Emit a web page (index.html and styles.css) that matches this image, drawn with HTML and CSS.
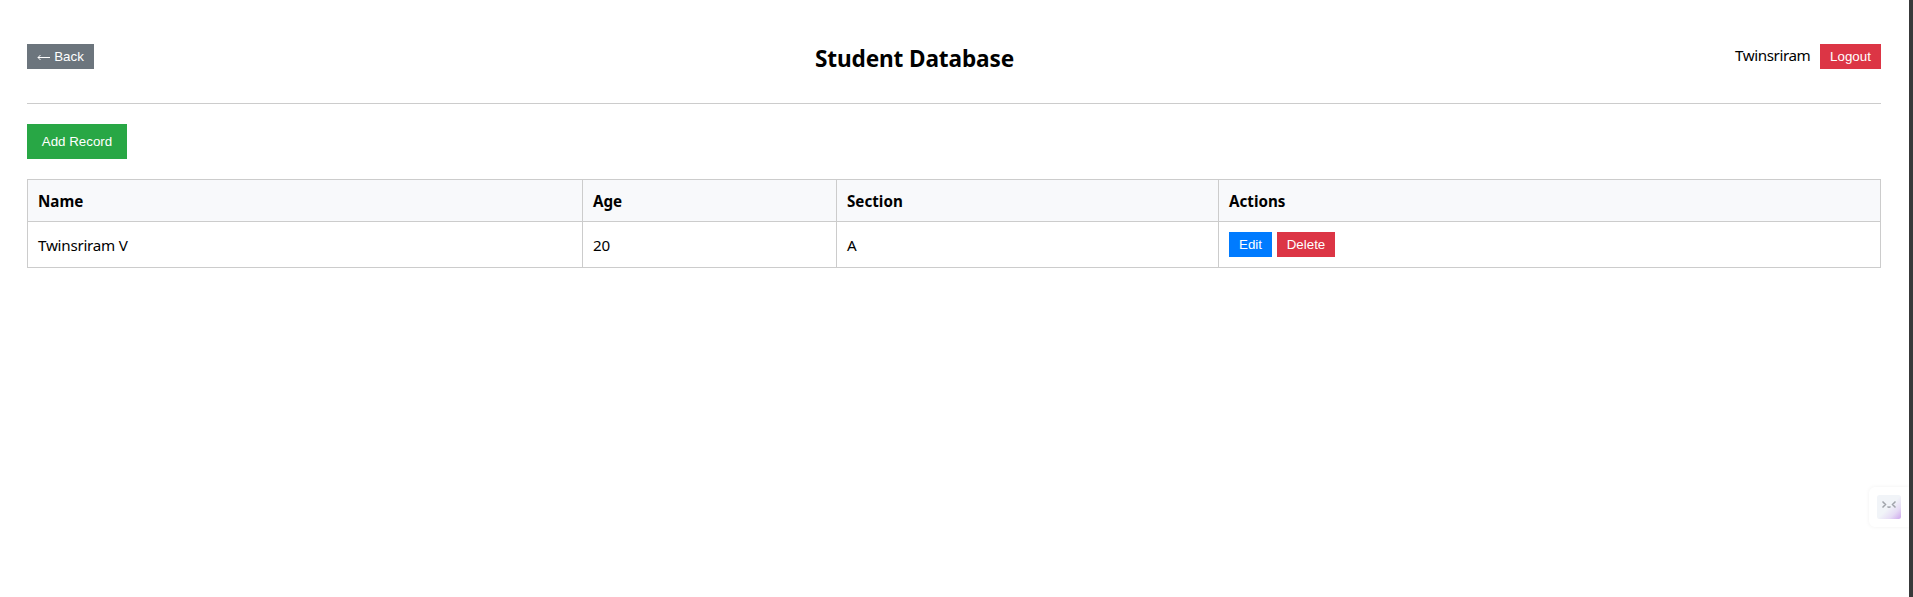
FILE: index.html
```html
<!DOCTYPE html>
<html lang="en">
<head>
<meta charset="utf-8">
<title>Student Database</title>
<link rel="stylesheet" href="styles.css">
</head>
<body>
<main class="page">
  <header class="header">
    <button class="btn btn-back"><svg class="arrow" viewBox="0 0 13 7" width="13" height="7"><path d="M13 3.5H1M3.500 1L1 3.500l2.500 2.500" fill="none" stroke="currentColor"/></svg>Back</button>
    <h2 class="title">Student Database</h2>
    <div class="user"><span class="username">Twinsriram</span><button class="btn btn-logout">Logout</button></div>
  </header>
  <button class="btn btn-add">Add Record</button>
  <table class="records">
    <colgroup><col class="c-name"><col class="c-age"><col class="c-section"><col class="c-actions"></colgroup>
    <thead><tr><th>Name</th><th>Age</th><th>Section</th><th>Actions</th></tr></thead>
    <tbody><tr><td>Twinsriram V</td><td>20</td><td>A</td><td><div class="actions"><button class="btn btn-edit">Edit</button><button class="btn btn-delete">Delete</button></div></td></tr></tbody>
  </table>
</main>
<aside class="widget">
  <svg width="24" height="24" viewBox="0 0 24 24">
    <defs><linearGradient id="g" x1="0" y1="0" x2="1" y2="1"><stop offset=".5" stop-color="#f1f4f8"/><stop offset=".75" stop-color="#e6dcf5"/><stop offset="1" stop-color="#cda6ec"/></linearGradient></defs>
    <rect width="24" height="24" rx="2.5" fill="url(#g)"/>
    <path d="M5.500 6.500l3 3-3 3M18.500 6.500l-3 3 3 3M10.500 11.500q1.500 1.600 3 0" fill="none" stroke="#a0a4aa" stroke-width="1.500"/>
  </svg>
</aside>
<div class="edge"></div>
</body>
</html>
```
FILE: styles.css
```css
* { box-sizing: border-box; }
body { margin: 0; height: 597px; overflow: hidden; background: #fff; color: #000; font: 15.2px/21px "Noto Sans", "Open Sans", sans-serif; }
.page { padding: 20px 32px 0 27px; }
.header { display: flex; justify-content: space-between; align-items: flex-start; height: 84px; padding-top: 24px; border-bottom: 1px solid #ccc; }
.title { margin: -1px 0 0; font-size: 22.6px; line-height: 32px; letter-spacing: -.12px; white-space: nowrap; }
.user { display: flex; gap: 10px; }
.username { width: 75px; padding-top: 1px; letter-spacing: -.42px; white-space: nowrap; }
.btn { display: block; height: 25px; padding: 0; border: 0; color: #fff; font: 13.333px "Liberation Sans", Arial, sans-serif; text-align: center; }
.btn-back { display: flex; align-items: center; justify-content: center; gap: 4px; width: 67px; background: #6c757d; }
.arrow { margin-top: 2px; }
.btn-logout { width: 61px; background: #dc3545; }
.btn-add { width: 100px; height: 35px; margin: 20px 0; background: #28a745; }
.records { width: 1854px; border-collapse: collapse; table-layout: fixed; }
.c-name { width: 555px; }
.c-age { width: 254px; }
.c-section { width: 382px; }
.c-actions { width: 662px; }
th, td { padding: 0 10px; border: 1px solid #ccc; text-align: left; white-space: nowrap; }
th { height: 42px; padding-top: 2px; background: #f8f9fb; }
td { height: 46px; padding-top: 1px; letter-spacing: -.25px; }
td:last-child { padding-top: 0; }
.actions { display: flex; gap: 5px; }
.btn-edit { width: 43px; background: #007bff; }
.btn-delete { width: 58px; background: #dc3545; }
.widget { position: absolute; left: 1869px; top: 487px; width: 40px; height: 40px; padding: 8px; border-radius: 6px 0 0 6px; background: #fff; box-shadow: 0 0 4px rgba(0,0,0,.06); }
.widget svg { display: block; }
.edge { position: absolute; top: 0; right: 0; width: 4px; height: 597px; background: #38393a; }
```
